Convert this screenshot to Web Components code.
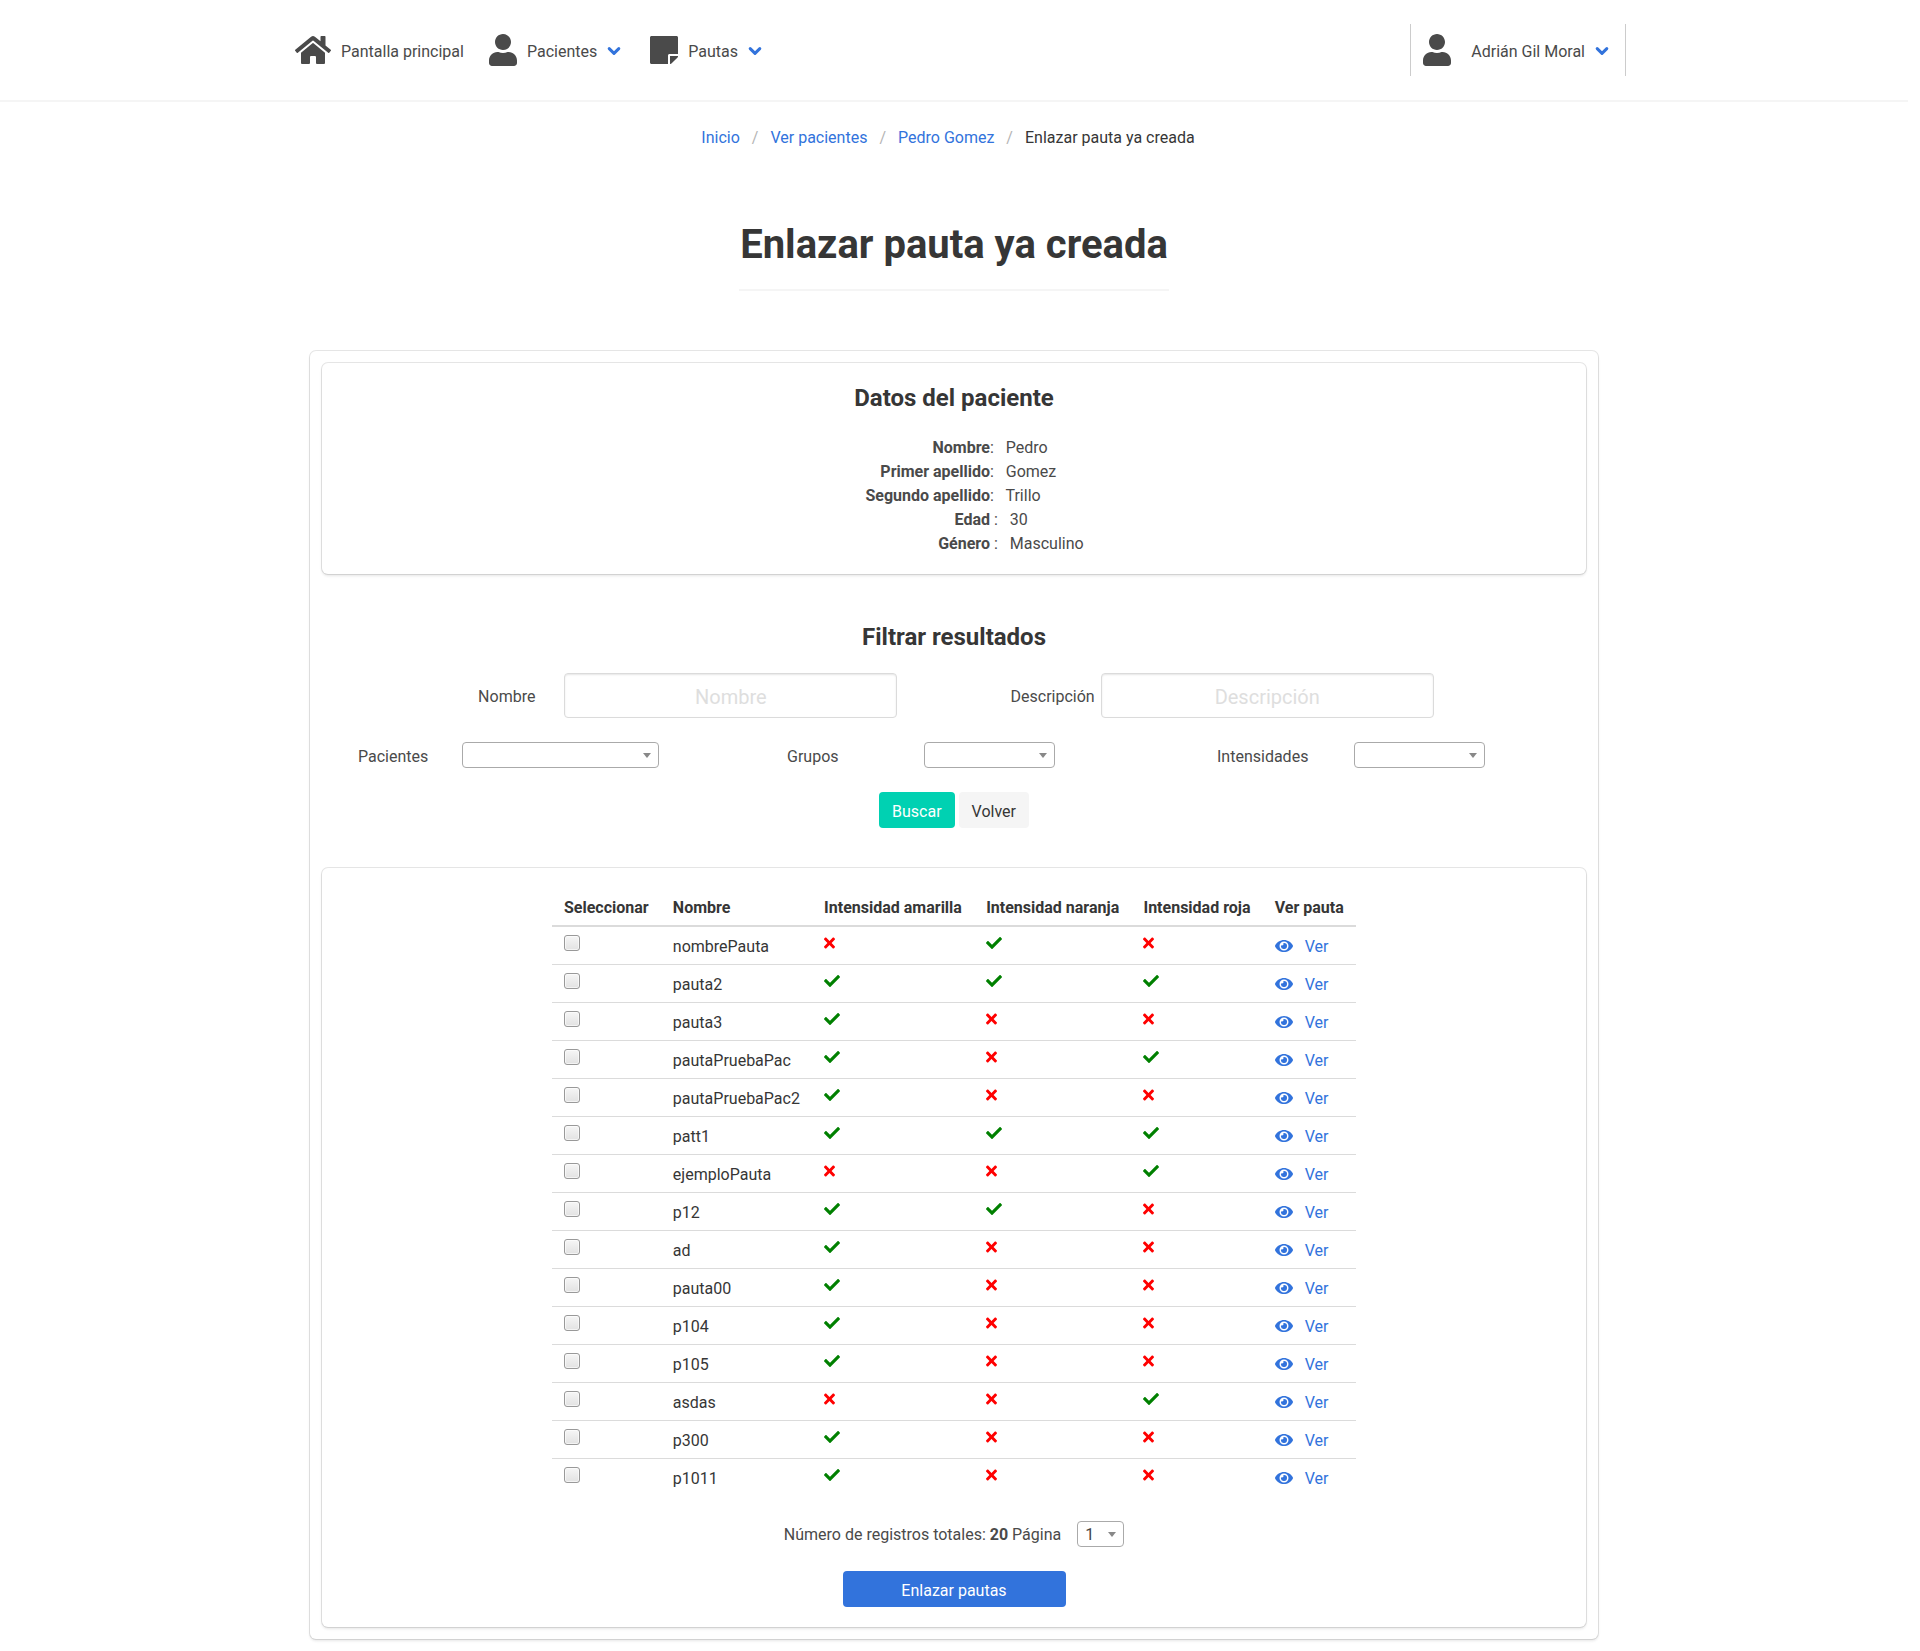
<!DOCTYPE html>
<html lang="es">
<head>
<meta charset="utf-8">
<meta name="viewport" content="width=device-width, initial-scale=1">
<title>Enlazar pauta ya creada</title>
<style>
  html { background: #fff; }
  body {
    margin: 0;
    padding: 0 12px 12px 0;
    font: 16px/24px Roboto, "Liberation Sans", sans-serif;
    color: #4a4a4a;
  }
</style>
</head>
<body>
<app-page></app-page>

<script>
const ICONS = {
  home: [576, 'M280.37 148.26L96 300.11V464a16 16 0 0 0 16 16l112.06-.29a16 16 0 0 0 15.92-16V368a16 16 0 0 1 16-16h64a16 16 0 0 1 16 16v95.64a16 16 0 0 0 16 16.05L464 480a16 16 0 0 0 16-16V300L295.67 148.26a12.19 12.19 0 0 0-15.3 0zM571.6 251.47L488 182.56V44.05a12 12 0 0 0-12-12h-56a12 12 0 0 0-12 12v72.61L318.47 43a48 48 0 0 0-61 0L4.34 251.47a12 12 0 0 0-1.6 16.9l25.5 31A12 12 0 0 0 45.15 301l235.22-193.74a12.19 12.19 0 0 1 15.3 0L530.9 301a12 12 0 0 0 16.9-1.6l25.5-31a12 12 0 0 0-1.7-16.93z'],
  user: [448, 'M224 256c70.7 0 128-57.3 128-128S294.7 0 224 0 96 57.3 96 128s57.3 128 128 128zm89.6 32h-16.7c-22.2 10.2-46.9 16-72.9 16s-50.6-5.8-72.9-16h-16.7C60.2 288 0 348.2 0 422.4V464c0 26.5 21.5 48 48 48h352c26.5 0 48-21.5 48-48v-41.6c0-74.2-60.2-134.4-134.4-134.4z'],
  note: [448, 'M312 320h136V56c0-13.3-10.7-24-24-24H24C10.7 32 0 42.7 0 56v400c0 13.3 10.7 24 24 24h264V344c0-13.2 10.8-24 24-24zm129 55l-98 98c-4.5 4.5-10.6 7-17 7h-6V352h128v6.1c0 6.3-2.5 12.4-7 16.9z'],
  check: [512, 'M173.898 439.404l-166.4-166.4c-9.997-9.997-9.997-26.206 0-36.204l36.203-36.204c9.997-9.998 26.207-9.998 36.204 0L192 312.69 432.095 72.596c9.997-9.997 26.207-9.997 36.204 0l36.203 36.204c9.997 9.997 9.997 26.206 0 36.204l-294.4 294.401c-9.998 9.997-26.207 9.997-36.204-.001z'],
  times: [352, 'M242.72 256l100.07-100.07c12.28-12.28 12.28-32.19 0-44.48l-22.24-22.24c-12.28-12.28-32.19-12.28-44.48 0L176 189.28 75.93 89.21c-12.28-12.28-32.19-12.28-44.48 0L9.21 111.45c-12.28 12.28-12.28 32.19 0 44.48L109.28 256 9.21 356.07c-12.28 12.28-12.28 32.19 0 44.48l22.24 22.24c12.28 12.28 32.2 12.28 44.48 0L176 322.72l100.07 100.07c12.28 12.28 32.2 12.28 44.48 0l22.24-22.24c12.28-12.28 12.28-32.19 0-44.48L242.72 256z'],
  eye: [576, 'M572.52 241.4C518.29 135.59 410.93 64 288 64S57.68 135.64 3.48 241.41a32.35 32.35 0 0 0 0 29.19C57.71 376.41 165.07 448 288 448s230.32-71.64 284.52-177.41a32.35 32.35 0 0 0 0-29.19zM288 400a144 144 0 1 1 144-144 143.93 143.93 0 0 1-144 144zm0-240a95.31 95.31 0 0 0-25.31 3.79 47.85 47.85 0 0 1-66.9 66.9A95.78 95.78 0 1 0 288 160z']
};

function define(name, render) {
  customElements.define(name, class extends HTMLElement {
    connectedCallback() {
      if (this.shadowRoot) return;
      this.attachShadow({ mode: 'open' }).innerHTML = render(this);
    }
  });
}

define('app-icon', el => {
  const [width, path] = ICONS[el.getAttribute('name')];
  const size = Number(el.getAttribute('size') || 16);
  return `
  <style>
    :host { display: block; flex: none; }
    svg { display: block; fill: currentColor; }
  </style>
  <svg width="${width * size / 512}" height="${size}" viewBox="0 0 ${width} 512" aria-hidden="true"><path d="${path}"/></svg>`;
});

define('nav-item', el => `
  <style>
    :host { display: flex; align-items: center; }
    a { display: flex; align-items: center; color: inherit; text-decoration: none; white-space: nowrap; }
    .icon { width: 48px; display: flex; justify-content: center; }
    .text { padding-top: 3px; }
    .arrow { display: block; margin: 2px 0 0 10px; fill: none; stroke: #3273dc; stroke-width: 3; stroke-linecap: round; stroke-linejoin: round; }
  </style>
  <a href="#">
    <span class="icon"><app-icon name="${el.getAttribute('icon')}" size="32"></app-icon></span>
    <span class="text"><slot></slot></span>
    ${el.hasAttribute('menu') ? '<svg class="arrow" width="14" height="10" viewBox="0 0 14 10" aria-hidden="true"><path d="M2.2 2.6L7 7.4l4.8-4.8"/></svg>' : ''}
  </a>`);

define('app-navbar', () => `
  <style>
    :host { display: block; box-shadow: 0 2px 0 0 #f5f5f5; }
    nav { display: flex; align-items: center; justify-content: space-between; max-width: 1344px; height: 100px; margin: 0 auto; }
    .start { display: flex; gap: 15px; padding-left: 7px; }
    .home { padding-left: 4px; }
    .note { margin-left: 4px; }
    .account { height: 52px; padding: 0 16px 0 2px; border: solid #ccc; border-width: 0 1px; }
    .name { padding-left: 10px; }
  </style>
  <nav aria-label="Principal">
    <div class="start">
      <nav-item icon="home"><span class="home">Pantalla principal</span></nav-item>
      <nav-item icon="user" menu>Pacientes</nav-item>
      <nav-item class="note" icon="note" menu>Pautas</nav-item>
    </div>
    <nav-item class="account" icon="user" menu><span class="name">Adrián Gil Moral</span></nav-item>
  </nav>`);

define('bread-crumbs', () => `
  <style>
    :host { display: block; }
    ul { display: flex; justify-content: center; margin: 0; padding: 0; list-style: none; }
    li { display: flex; }
    li + li::before { content: "/"; color: #b5b5b5; }
    a { padding: 0 12px; color: #3273dc; text-decoration: none; }
    li:first-child a { padding-left: 0; }
    a[aria-current] { color: #363636; }
  </style>
  <nav aria-label="Ruta">
    <ul>
      <li><a href="#">Inicio</a></li>
      <li><a href="#">Ver pacientes</a></li>
      <li><a href="#">Pedro Gomez</a></li>
      <li><a href="#" aria-current="page">Enlazar pauta ya creada</a></li>
    </ul>
  </nav>`);

define('page-title', () => `
  <style>
    :host { display: flex; justify-content: center; }
    h1 { margin: 0; padding: 0 1px 22px; border-bottom: 2px solid #f5f5f5; font-size: 40px; line-height: 45px; font-weight: 700; color: #363636; }
  </style>
  <h1><slot></slot></h1>`);

define('section-title', () => `
  <style>
    :host { display: block; text-align: center; }
    h2 { margin: 0; font-size: 24px; line-height: 30px; font-weight: 700; color: #363636; }
  </style>
  <h2><slot></slot></h2>`);

define('info-box', () => `
  <style>
    :host {
      display: block; padding: 20px; border-radius: 6px; background: #fff;
      box-shadow: 0 2px 3px rgba(10,10,10,.1), 0 0 0 1px rgba(10,10,10,.1);
    }
  </style>
  <slot></slot>`);

define('patient-data', () => {
  const rows = [['Nombre', ':', 'Pedro'], ['Primer apellido', ':', 'Gomez'], ['Segundo apellido', ':', 'Trillo'],
    ['Edad', '&nbsp;:', '30'], ['Género', '&nbsp;:', 'Masculino']];
  return `
  <style>
    :host { display: block; }
    dl { display: grid; grid-template-columns: 9fr 8fr; margin: 23px 0 0; }
    dt { text-align: right; font-weight: 700; }
    dd { margin: 0; }
  </style>
  <section-title>Datos del paciente</section-title>
  <dl>${rows.map(([k, sep, v]) => `<dt>${k}</dt><dd>${sep}&nbsp;&nbsp; ${v}</dd>`).join('')}</dl>`;
});

define('text-field', el => `
  <style>
    :host { display: grid; grid-template-columns: var(--cols); align-items: center; }
    label { padding-top: 2px; min-width: 0; }
    input {
      box-sizing: border-box; width: 100%; min-width: 0; height: 45px; margin: 0; padding: 2px 12px 0;
      border: 1px solid #dbdbdb; border-radius: 4px; background: #fff; box-shadow: inset 0 1px 2px rgba(10,10,10,.1);
      font: 20px/30px Roboto, "Liberation Sans", sans-serif; color: #363636; text-align: center;
    }
    input::placeholder { color: #dedede; opacity: 1; }
  </style>
  <label for="field">${el.getAttribute('label')}</label>
  <input id="field" type="text" placeholder="${el.getAttribute('label')}">`);

define('select-field', el => `
  <style>
    :host { display: grid; grid-template-columns: var(--cols); align-items: center; }
    label { padding-top: var(--label-drop, 4px); line-height: 22px; min-width: 0; }
    .box { display: grid; align-items: center; }
    select, svg { grid-area: 1 / 1; }
    select {
      appearance: none; box-sizing: border-box; width: 100%; height: 26px; margin: 0; padding: 1px 20px 0 7px;
      border: 1px solid #aaa; border-radius: 4px; background: #fff; color: #444;
      font: 16px/24px Roboto, "Liberation Sans", sans-serif;
    }
    svg { justify-self: end; margin-right: 8px; fill: #888; pointer-events: none; }
  </style>
  <label for="field"><slot>${el.getAttribute('label') || ''}</slot></label>
  <span class="box">
    <select id="field"><option>${el.getAttribute('value') || ''}</option></select>
    <svg width="8" height="5" viewBox="0 0 8 5" aria-hidden="true"><path d="M0 0h8L4 5z"/></svg>
  </span>`);

define('app-button', el => `
  <style>
    :host { display: block; }
    button {
      box-sizing: border-box; width: 100%; height: 36px; margin: 0; padding: 0 13px; border: 0; border-radius: 4px;
      background: var(--bg, #f5f5f5); color: var(--fg, #363636);
      font: 16px/24px Roboto, "Liberation Sans", sans-serif; cursor: pointer;
    }
    span { display: block; padding-top: 4px; }
  </style>
  <button type="button"><span><slot></slot></span></button>`);

define('filter-form', () => `
  <style>
    :host { display: block; }
    .row { display: grid; }
    .texts { grid-template-columns: 156fr 419fr 113fr 423fr 152fr; margin-top: 21px; }
    .lists { grid-template-columns: 36fr 301fr 128fr 268fr 162fr 268fr 101fr; margin-top: 24px; }
    .row > :nth-child(1) { grid-column: 2; }
    .row > :nth-child(2) { grid-column: 4; }
    .row > :nth-child(3) { grid-column: 6; }
    .name { --cols: 86fr 333fr; }
    .description { --cols: 90fr 333fr; }
    .wide { --cols: 104fr 197fr; }
    .narrow { --cols: 137fr 131fr; }
    .actions { display: flex; justify-content: center; gap: 4px; margin-top: 24px; }
    .search { --bg: #00d1b2; --fg: #fff; }
  </style>
  <section-title>Filtrar resultados</section-title>
  <div class="row texts">
    <text-field class="name" label="Nombre"></text-field>
    <text-field class="description" label="Descripción"></text-field>
  </div>
  <div class="row lists">
    <select-field class="wide" label="Pacientes"></select-field>
    <select-field class="narrow" label="Grupos"></select-field>
    <select-field class="narrow" label="Intensidades"></select-field>
  </div>
  <div class="actions">
    <app-button class="search">Buscar</app-button>
    <app-button>Volver</app-button>
  </div>`);

define('pauta-table', () => {
  /* name, then one flag per intensity: yellow, orange, red */
  const rows = [['nombrePauta', '010'], ['pauta2', '111'], ['pauta3', '100'], ['pautaPruebaPac', '101'],
    ['pautaPruebaPac2', '100'], ['patt1', '111'], ['ejemploPauta', '001'], ['p12', '110'], ['ad', '100'],
    ['pauta00', '100'], ['p104', '100'], ['p105', '100'], ['asdas', '001'], ['p300', '100'], ['p1011', '100']];
  const mark = f => f === '1' ? '<app-icon class="yes" name="check"></app-icon>' : '<app-icon class="no" name="times"></app-icon>';
  return `
  <style>
    :host { display: flex; justify-content: center; }
    table { min-width: 804px; border-spacing: 0; color: #363636; }
    th { padding: 8px 12px 5px; border-bottom: 2px solid #dbdbdb; text-align: left; font-weight: 700; white-space: nowrap; }
    td { padding: 8px 12px 5px; border-bottom: 1px solid #dbdbdb; vertical-align: top; }
    tr:last-child td { border-color: transparent; }
    input {
      appearance: none; display: block; box-sizing: border-box; width: 16px; height: 16px; margin: 0;
      border: 1px solid #999; border-radius: 3px; background: linear-gradient(#f6f6f6, #e2e2e2);
      box-shadow: inset 0 0 0 1px rgba(255,255,255,.6);
    }
    input:checked { background: #3273dc; }
    .yes { color: green; }
    .no { color: red; }
    a { color: #3273dc; text-decoration: none; }
    a app-icon { display: inline-block; margin-right: 12px; vertical-align: -2px; }
  </style>
  <table>
    <thead><tr><th>Seleccionar</th><th>Nombre</th><th>Intensidad amarilla</th><th>Intensidad naranja</th><th>Intensidad roja</th><th>Ver pauta</th></tr></thead>
    <tbody>${rows.map(([name, flags]) => `
      <tr><td><input type="checkbox" aria-label="Seleccionar ${name}"></td><td>${name}</td>${[...flags].map(f => `<td>${mark(f)}</td>`).join('')}<td><a href="#"><app-icon name="eye"></app-icon>Ver</a></td></tr>`).join('')}
    </tbody>
  </table>`;
});

define('pauta-list', () => `
  <style>
    :host { display: flex; flex-direction: column; align-items: center; gap: 24px; }
    .pager { --cols: auto 47px; --label-drop: 1px; column-gap: 16px; }
    .link { width: 223px; --bg: #3273dc; --fg: #fff; }
  </style>
  <pauta-table></pauta-table>
  <select-field class="pager" value="1">Número de registros totales: <strong>20</strong> Página</select-field>
  <app-button class="link">Enlazar pautas</app-button>`);

define('app-page', () => `
  <style>
    :host { display: block; }
    bread-crumbs { margin-top: 26px; }
    page-title { margin-top: 72px; }
    main { max-width: 1288px; margin: 60px auto 0; }
    .outer { padding: 12px; }
    .patient { padding-bottom: 18px; }
    filter-form { margin: 48px 0 40px; }
  </style>
  <app-navbar></app-navbar>
  <bread-crumbs></bread-crumbs>
  <page-title>Enlazar pauta ya creada</page-title>
  <main>
    <info-box class="outer">
      <info-box class="patient"><patient-data></patient-data></info-box>
      <filter-form></filter-form>
      <info-box><pauta-list></pauta-list></info-box>
    </info-box>
  </main>`);
</script>
</body>
</html>
